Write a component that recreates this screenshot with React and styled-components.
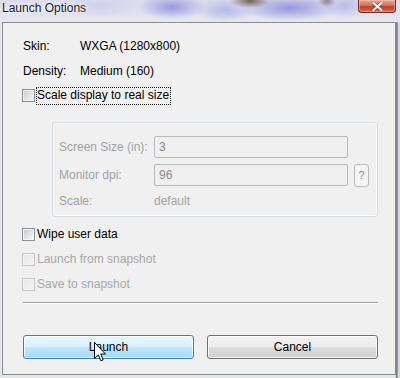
import React from "react";
import styled, { createGlobalStyle } from "styled-components";

const Global = createGlobalStyle`
  html, body { margin: 0; padding: 0; }
  body {
    width: 400px;
    height: 378px;
    overflow: hidden;
    font-family: "Liberation Sans", Arial, sans-serif;
    font-size: 12px;
  }
`;

const Window = styled.div`
  position: relative;
  width: 400px;
  height: 378px;
  display: flex;
  flex-direction: column;
  background: #e8e9f0;
  overflow: hidden;
`;

const TitleBar = styled.div`
  height: 22px;
  flex: none;
  display: flex;
  justify-content: space-between;
  align-items: flex-start;
  background:
    radial-gradient(ellipse 20px 7px at 250px 1px, rgba(100, 85, 62, 0.9), rgba(100, 85, 62, 0) 100%),
    radial-gradient(ellipse 9px 6px at 327px 1px, rgba(110, 105, 110, 0.75), rgba(110, 105, 110, 0) 100%),
    radial-gradient(ellipse 34px 12px at 172px 7px, rgba(140, 140, 222, 0.85), rgba(140, 140, 222, 0) 100%),
    radial-gradient(ellipse 50px 13px at 290px 8px, rgba(138, 138, 222, 0.85), rgba(138, 138, 222, 0) 100%),
    radial-gradient(ellipse 30px 12px at 225px 10px, rgba(165, 165, 228, 0.7), rgba(165, 165, 228, 0) 100%),
    radial-gradient(ellipse 22px 12px at 345px 6px, rgba(170, 170, 228, 0.7), rgba(170, 170, 228, 0) 100%),
    radial-gradient(ellipse 40px 12px at 100px 6px, rgba(200, 200, 235, 0.6), rgba(200, 200, 235, 0) 100%),
    linear-gradient(to bottom, #dcdcee 0%, #e0e0f0 60%, #e6e7f1 100%);
`;

const Title = styled.div`
  padding: 1px 0 0 2px;
  line-height: 14px;
  font-size: 12px;
  color: #1b1b22;
  text-shadow: 0 0 6px rgba(255, 255, 255, 0.95), 0 0 3px rgba(255, 255, 255, 0.9);
`;

const CloseButton = styled.div`
  width: 38px;
  height: 13px;
  margin-right: 4px;
  box-sizing: border-box;
  border: 1px solid #6b2a22;
  border-top: none;
  border-radius: 0 0 4px 4px;
  background: linear-gradient(to bottom, #e6a696 0%, #d3735f 45%, #c0412b 55%, #cd6a4e 100%);
  box-shadow: inset 0 0 0 1px rgba(255, 210, 200, 0.45);
  display: flex;
  align-items: center;
  justify-content: center;
`;

const Frame = styled.div`
  flex: 1;
  display: flex;
  padding: 0 4px 3px 2px;
  background: linear-gradient(to right, #e4e5ee 0%, #e4e5ee 98.8%, #6a6a70 99.2%, #d8d8e0 99.6%);
`;

const Client = styled.div`
  flex: 1;
  display: flex;
  flex-direction: column;
  background: #f0f0f0;
  border: 1px solid #8c8c8c;
  padding: 10px 17px 15px 20px;
`;

const InfoRow = styled.div`
  height: 25px;
  display: flex;
  align-items: center;
  color: #000;
`;

const InfoLabel = styled.span`
  width: 57px;
  flex: none;
`;

const CheckRow = styled.label`
  height: 25px;
  display: flex;
  align-items: center;
  color: ${(p) => (p.disabled ? "#a7a7a7" : "#000")};
`;

const Box = styled.span`
  width: 13px;
  height: 13px;
  margin-left: -1px;
  box-sizing: border-box;
  flex: none;
  border: 1px solid ${(p) => (p.disabled ? "#c5c5c5" : "#8e8f8f")};
  padding: 1px;
  background: #f4f4f4;
  &::after {
    content: "";
    display: block;
    width: 100%;
    height: 100%;
    background: ${(p) =>
      p.disabled
        ? "linear-gradient(135deg, #e6e6e6 0%, #f3f3f3 100%)"
        : "linear-gradient(135deg, #cbcfd5 0%, #dfe2e6 50%, #f6f6f6 100%)"};
  }
`;

const CheckText = styled.span`
  margin-left: 1px;
  padding: 1px 1px 2px 0;
  line-height: 13px;
  border: 1px dotted ${(p) => (p.focused ? "#222" : "transparent")};
`;

const Group = styled.div`
  margin: 14px 0 0 29px;
  width: 326px;
  box-sizing: border-box;
  border: 1px solid #d5dde2;
  border-radius: 3px;
  box-shadow: inset 0 0 0 1px #fbfbfb;
  padding: 13px 0 4px 6px;
  display: flex;
  flex-direction: column;
  gap: 6px;
`;

const FieldRow = styled.div`
  height: 22px;
  display: flex;
  align-items: center;
  color: #a2a2a2;
  margin-top: ${(p) => (p.last ? "-2px" : "0")};
`;

const FieldLabel = styled.span`
  width: 95px;
  flex: none;
`;

const Input = styled.div`
  width: 194px;
  height: 22px;
  box-sizing: border-box;
  border: 1px solid #b7babc;
  border-radius: 2px;
  background: #f0f0f0;
  color: #8a8a8a;
  padding-left: 4px;
  line-height: 20px;
  flex: none;
`;

const HelpButton = styled.div`
  width: 15px;
  height: 23px;
  margin-left: 6px;
  box-sizing: border-box;
  border: 1px solid #b9bcbe;
  border-radius: 3px;
  background: #f4f4f4;
  color: #8e8e8e;
  font-size: 11px;
  display: flex;
  align-items: center;
  justify-content: center;
  flex: none;
`;

const Checks = styled.div`
  margin-top: 5px;
  display: flex;
  flex-direction: column;
`;

const Separator = styled.div`
  margin-top: 5px;
  border-top: 1px solid #a0a0a0;
  border-bottom: 1px solid #ffffff;
`;

const ButtonRow = styled.div`
  margin-top: 31px;
  display: flex;
  gap: 13px;
`;

const Button = styled.div`
  flex: 1;
  height: 24px;
  box-sizing: border-box;
  border: 1px solid ${(p) => (p.hot ? "#3c7fb1" : "#707070")};
  border-radius: 3px;
  box-shadow: inset 0 0 0 1px ${(p) => (p.hot ? "rgba(255,255,255,0.7)" : "rgba(255,255,255,0.75)")};
  background: ${(p) =>
    p.hot
      ? "linear-gradient(to bottom, #eaf6fd 0%, #d9f0fc 50%, #bee6fd 50%, #a7d9f5 100%)"
      : "linear-gradient(to bottom, #f2f2f2 0%, #ebebeb 50%, #dddddd 50%, #cfcfcf 100%)"};
  display: flex;
  align-items: center;
  justify-content: center;
  color: #000;
`;

const Cursor = styled.svg`
  position: absolute;
  left: 94px;
  top: 342px;
  width: 13px;
  height: 20px;
  overflow: visible;
`;

export default function App() {
  return (
    <>
      <Global />
      <Window>
        <TitleBar>
          <Title>Launch Options</Title>
          <CloseButton>
            <svg width="11" height="9" viewBox="0 0 11 9">
              <path
                d="M1.5 1 L9.5 8 M9.5 1 L1.5 8"
                stroke="#5a2a22"
                strokeWidth="3.4"
                strokeLinecap="square"
                opacity="0.6"
              />
              <path
                d="M1.5 1 L9.5 8 M9.5 1 L1.5 8"
                stroke="#ffffff"
                strokeWidth="2"
                strokeLinecap="square"
              />
            </svg>
          </CloseButton>
        </TitleBar>
        <Frame>
          <Client>
            <InfoRow>
              <InfoLabel>Skin:</InfoLabel>
              <span>WXGA (1280x800)</span>
            </InfoRow>
            <InfoRow>
              <InfoLabel>Density:</InfoLabel>
              <span>Medium (160)</span>
            </InfoRow>
            <CheckRow>
              <Box />
              <CheckText focused>Scale display to real size</CheckText>
            </CheckRow>

            <Group>
              <FieldRow>
                <FieldLabel>Screen Size (in):</FieldLabel>
                <Input>3</Input>
              </FieldRow>
              <FieldRow>
                <FieldLabel>Monitor dpi:</FieldLabel>
                <Input>96</Input>
                <HelpButton>?</HelpButton>
              </FieldRow>
              <FieldRow last>
                <FieldLabel>Scale:</FieldLabel>
                <span>default</span>
              </FieldRow>
            </Group>

            <Checks>
              <CheckRow>
                <Box />
                <CheckText>Wipe user data</CheckText>
              </CheckRow>
              <CheckRow disabled>
                <Box disabled />
                <CheckText>Launch from snapshot</CheckText>
              </CheckRow>
              <CheckRow disabled>
                <Box disabled />
                <CheckText>Save to snapshot</CheckText>
              </CheckRow>
            </Checks>

            <Separator />

            <ButtonRow>
              <Button hot>Launch</Button>
              <Button>Cancel</Button>
            </ButtonRow>
          </Client>
        </Frame>
        <Cursor viewBox="0 0 13 20">
          <path
            d="M0.5 0.5 L0.5 16.5 L4.3 12.9 L6.9 18.8 L9.2 17.8 L6.7 12 L11.5 12 Z"
            fill="#ffffff"
            stroke="#000000"
            strokeWidth="1"
            strokeLinejoin="miter"
          />
        </Cursor>
      </Window>
    </>
  );
}
